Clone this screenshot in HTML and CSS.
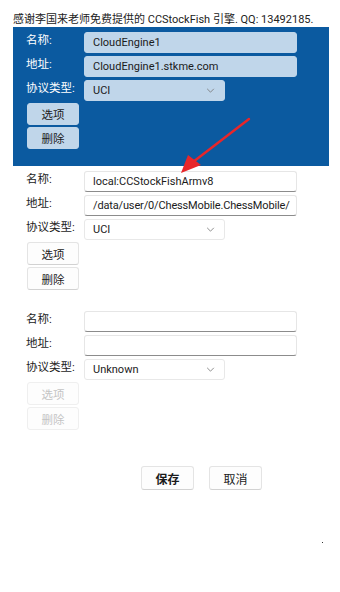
FILE: index.html
```html
<!DOCTYPE html>
<html lang="zh">
<head>
  <meta charset="UTF-8">
  <meta name="viewport" content="width=device-width, initial-scale=1.0">
  <title>引擎设置</title>
  <link rel="stylesheet" href="styles.css">
</head>
<body>
  <div class="page">
    <p class="thanks">感谢李国来老师免费提供的 CCStockFish 引擎. QQ: 13492185.</p>

    <!-- cloud engine, selected -->
    <div class="engine-wrap selected">
      <div class="engine">
        <span class="label">名称:</span>
        <div class="field">CloudEngine1</div>
        <span class="label">地址:</span>
        <div class="field">CloudEngine1.stkme.com</div>
        <span class="label">协议类型:</span>
        <div class="select"><span>UCI</span><svg class="chev" viewBox="0 0 10 6"><path d="M1 1 L5 5 L9 1"/></svg></div>
        <button class="btn">选项</button>
        <button class="btn">删除</button>
      </div>
    </div>

    <!-- local engine -->
    <div class="engine-wrap local">
      <div class="engine">
        <span class="label">名称:</span>
        <div class="field">local:CCStockFishArmv8</div>
        <span class="label">地址:</span>
        <div class="field">/data/user/0/ChessMobile.ChessMobile/</div>
        <span class="label">协议类型:</span>
        <div class="select"><span>UCI</span><svg class="chev" viewBox="0 0 10 6"><path d="M1 1 L5 5 L9 1"/></svg></div>
        <button class="btn">选项</button>
        <button class="btn">删除</button>
      </div>
    </div>

    <!-- new engine -->
    <div class="engine-wrap empty">
      <div class="engine">
        <span class="label">名称:</span>
        <div class="field"></div>
        <span class="label">地址:</span>
        <div class="field"></div>
        <span class="label">协议类型:</span>
        <div class="select"><span>Unknown</span><svg class="chev" viewBox="0 0 10 6"><path d="M1 1 L5 5 L9 1"/></svg></div>
        <button class="btn" disabled>选项</button>
        <button class="btn" disabled>删除</button>
      </div>
    </div>

    <div class="actions">
      <button class="btn big strong">保存</button>
      <button class="btn big">取消</button>
    </div>
    <div class="dot"></div>

    <svg class="arrow" width="80" height="60" viewBox="0 0 80 60">
      <path d="M70 2 L14 45" stroke="#e8262a" stroke-width="2.4" stroke-linecap="round" fill="none"/>
      <path d="M2 56 L9 38 L22 48 Z" fill="#e8262a"/>
    </svg>
  </div>
</body>
</html>
```

FILE: styles.css
```css
body {
  margin: 0;
  background: #fff;
  font-family: Roboto, "Noto Sans CJK SC", sans-serif;
  color: #1b1b1b;
}

.page {
  position: relative;
  width: 340px;
  height: 592px;
}

.thanks {
  margin: 0;
  padding: 13px 0 0 13px;
  font-size: 11px;
  line-height: 14px;
  color: #222;
  white-space: nowrap;
}

/* Engine blocks */
.engine-wrap {
  margin: 0 11px 0 13px;
  padding: 5px 0 16px 13px;
}

.engine-wrap.selected {
  background: #0b5aa0;
  color: #fff;
  padding-bottom: 17px;
}

.engine-wrap.empty {
  padding-bottom: 0;
}

.engine {
  display: grid;
  grid-template-columns: 58px 213px;
  row-gap: 3px;
  align-items: start;
}

.label {
  font-size: 11.5px;
  line-height: 16px;
  grid-column: 1;
}

.field {
  height: 21px;
  box-sizing: border-box;
  padding: 0 6px 0 8px;
  font-size: 11px;
  line-height: 20px;
  background: #fff;
  border: 1px solid #e6e6e6;
  border-bottom-color: #8c8c8c;
  border-radius: 3px;
  white-space: nowrap;
  overflow: hidden;
  color: #1b1b1b;
}

.local .field:nth-of-type(2) {
  letter-spacing: -0.15px;
}

.select {
  width: 141px;
  height: 21px;
  box-sizing: border-box;
  padding: 0 8px;
  display: flex;
  align-items: center;
  justify-content: space-between;
  font-size: 11px;
  background: #fff;
  border: 1px solid #e8e8e8;
  border-radius: 3px;
  color: #1b1b1b;
}

.chev {
  width: 9px;
  height: 5px;
  margin-right: 1px;
  fill: none;
  stroke: #777;
  stroke-width: 1;
}

.selected .field,
.selected .select {
  background: #c0d6ea;
  border-color: #c0d6ea;
}

.btn {
  grid-column: 1;
  width: 52px;
  height: 23px;
  margin-left: 1px;
  padding: 0;
  font-family: inherit;
  font-size: 11.5px;
  color: #1b1b1b;
  background: #fdfdfd;
  border: 1px solid #e4e4e4;
  border-bottom-color: #d2d2d2;
  border-radius: 3px;
}

.engine .btn + .btn {
  margin-top: -1px;
}

.engine .select + .btn {
  margin-top: -1px;
}

.selected .btn {
  background: #c0d6ea;
  border-color: #c0d6ea;
  height: 22px;
}

.btn:disabled {
  color: #c4c4c4;
  background: #fdfdfd;
  border-color: #efefef;
}

/* Save / cancel */
.actions {
  display: flex;
  gap: 15px;
  padding: 36px 0 0 141px;
}

.btn.big {
  width: 53px;
  height: 24px;
  margin: 0;
  font-size: 12px;
}

.btn.strong {
  font-weight: bold;
}

.dot {
  width: 1px;
  height: 1px;
  margin: 52px 0 0 322px;
  background: #333;
}

.arrow {
  position: absolute;
  left: 179px;
  top: 117px;
}
```
